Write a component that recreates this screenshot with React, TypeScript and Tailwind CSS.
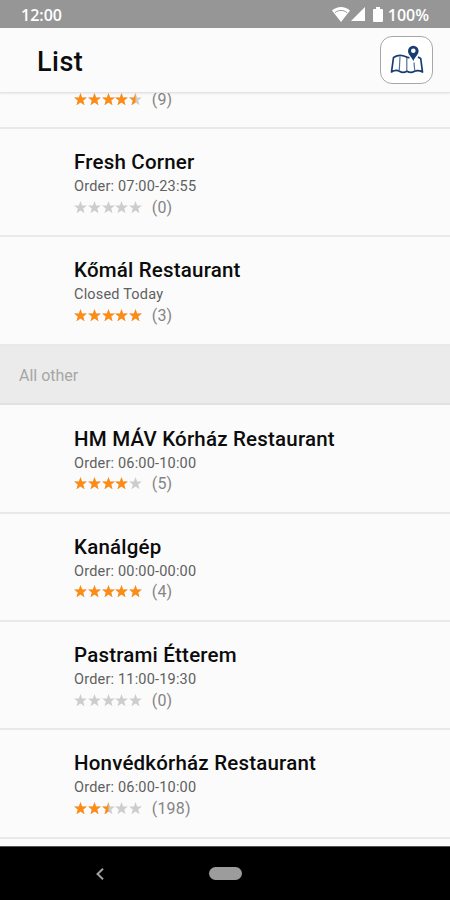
import React from "react";

type Place = { name: string; info: string; rating: number; reviews: number };

const recommended: Place[] = [
  { name: "Fresh Corner", info: "Order: 07:00-23:55", rating: 0, reviews: 0 },
  { name: "Kőmál Restaurant", info: "Closed Today", rating: 5, reviews: 3 },
];

const others: Place[] = [
  { name: "HM MÁV Kórház Restaurant", info: "Order: 06:00-10:00", rating: 4, reviews: 5 },
  { name: "Kanálgép", info: "Order: 00:00-00:00", rating: 5, reviews: 4 },
  { name: "Pastrami Étterem", info: "Order: 11:00-19:30", rating: 0, reviews: 0 },
  { name: "Honvédkórház Restaurant", info: "Order: 06:00-10:00", rating: 2.5, reviews: 198 },
];

const STAR = "M6.5 0 8.1 4.5 12.9 4.6 9.2 7.5 10.5 12.2 6.5 9.5 2.5 12.2 3.8 7.5 0.1 4.6 4.9 4.5Z";

function Star({ fill }: { fill: number }) {
  return (
    <svg viewBox="0 0 13 13" className="w-[13px] h-[13px] shrink-0">
      <path d={STAR} fill="#cdcdcd" />
      {fill > 0 && (
        <path d={STAR} fill="#ff8c12" style={{ clipPath: `inset(0 ${(1 - fill) * 100}% 0 0)` }} />
      )}
    </svg>
  );
}

function Rating({ rating, reviews }: { rating: number; reviews: number }) {
  return (
    <div className="flex items-center h-5">
      <div className="flex gap-[0.8px]">
        {[0, 1, 2, 3, 4].map((i) => (
          <Star key={i} fill={Math.max(0, Math.min(1, rating - i))} />
        ))}
      </div>
      <span className="ml-[9.5px] pt-px text-base leading-5 tracking-[0.2px] text-[#858585]">({reviews})</span>
    </div>
  );
}

function PlaceRow({ place }: { place: Place }) {
  return (
    <div className="h-[108.3px] shrink-0 border-b-2 border-[#e9e9e9] pl-[74px] pt-[20.2px]">
      <h2 className="text-[20.5px] leading-[26px] tracking-[0.2px] font-medium text-[#0c0c0c] whitespace-nowrap">
        {place.name}
      </h2>
      <p className="text-[14.5px] leading-6 -mb-0.5 tracking-[0.19px] text-[#606060]">{place.info}</p>
      <Rating rating={place.rating} reviews={place.reviews} />
    </div>
  );
}

function StatusBar() {
  return (
    <div className="h-7 shrink-0 bg-[#969696] flex items-center justify-between px-[21px] text-white">
      <span className="font-['Open_Sans',sans-serif] font-semibold text-base leading-7 pt-px">12:00</span>
      <div className="flex items-center">
        <svg viewBox="0 0 18 15" className="w-[18px] h-[15px]">
          <path d="M0 3.6C5-1.1 13-1.1 18 3.6L9 15Z" fill="#fff" />
          <path d="M3 5.6C6.6 2.7 11.4 2.7 15 5.6" fill="none" stroke="#969696" strokeWidth="1" />
        </svg>
        <svg viewBox="0 0 14 14" className="w-[14px] h-[14px] ml-px">
          <path d="M14 0V14H0Z" fill="#fff" />
        </svg>
        <svg viewBox="0 0 10 15" className="w-[10px] h-[15px] ml-2">
          <path d="M3 0H7V2H9Q10 2 10 3V14Q10 15 9 15H1Q0 15 0 14V3Q0 2 1 2H3Z" fill="#fff" />
        </svg>
        <span className="ml-[5px] font-['Open_Sans',sans-serif] font-semibold text-base leading-7 pt-px">100%</span>
      </div>
    </div>
  );
}

function MapIcon() {
  return (
    <svg viewBox="0 0 34 30" className="w-[34px] h-[30px]" fill="none" stroke="#183c72">
      <path
        d="M19.5 12.5C18.3 12.7 17 12.4 16 11.8 12 9.8 7.5 9.8 3.5 12.5L1.5 27C4.500 25.200 7.500 25.200 9.500 26.200 12 27.800 14.500 27.600 17 26.200 19.500 27.600 22 27.800 24.500 26.200 27 25.200 29.500 25.400 32.500 27L30.700 13.500 28 12"
        strokeWidth="1.7"
        strokeLinejoin="round"
      />
      <path d="M10 11.5 9.3 25.5M16.8 12.8V26M24 17.5 24.7 25.5" strokeWidth="1.2" stroke="#4e719d" />
      <path
        d="M23.3 16.5C22.5 12.5 18 10 18 6a5.3 5.3 0 0 1 10.6 0C28.6 10 24.1 12.5 23.3 16.5Z"
        fill="#183c72"
        stroke="none"
      />
      <circle cx="23.3" cy="5.8" r="2.3" fill="#fff" stroke="none" />
    </svg>
  );
}

function Header() {
  return (
    <header className="h-[65px] shrink-0 bg-[#fbfbfb] flex items-center justify-between pl-[37px] pr-[17px] relative z-10 border-b border-[#e3e3e3] shadow-[0_1px_2px_rgba(0,0,0,0.07)]">
      <h1 className="text-[27px] leading-8 tracking-[0.5px] font-medium text-[#0c0c0c] pt-[3px]">List</h1>
      <button className="w-[53px] h-[48px] rounded-xl border border-[#a8a8a8] bg-white flex items-center justify-center">
        <MapIcon />
      </button>
    </header>
  );
}

export default function App() {
  return (
    <div className="w-[450px] h-[900px] overflow-hidden flex flex-col bg-[#fbfbfb] font-[Roboto,sans-serif]">
      <StatusBar />
      <Header />
      <main className="flex-1 min-h-0 overflow-hidden flex flex-col">
        <div className="h-9 shrink-0 border-b-2 border-[#e9e9e9] pl-[74px]">
          <div className="-mt-1">
            <Rating rating={4.5} reviews={9} />
          </div>
        </div>
        {recommended.map((place) => (
          <PlaceRow key={place.name} place={place} />
        ))}
        <div className="h-[59.8px] shrink-0 bg-[#ebebeb] border-b-2 border-[#e2e2e2] pl-[19px] pt-[3px] flex items-center text-base text-[#a6a6a6]">
          All other
        </div>
        {others.map((place) => (
          <PlaceRow key={place.name} place={place} />
        ))}
      </main>
      <nav className="h-[54px] shrink-0 bg-black border-t border-[#555] flex items-center">
        <svg viewBox="0 0 8 12" className="w-2 h-3 ml-[96px]" fill="none" stroke="#a0a0a0" strokeWidth="2">
          <path d="M7 0.7 1.5 6 7 11.3" />
        </svg>
        <div className="w-[33px] h-[13px] rounded-full bg-[#9c9c9c] ml-[105px]" />
      </nav>
    </div>
  );
}
